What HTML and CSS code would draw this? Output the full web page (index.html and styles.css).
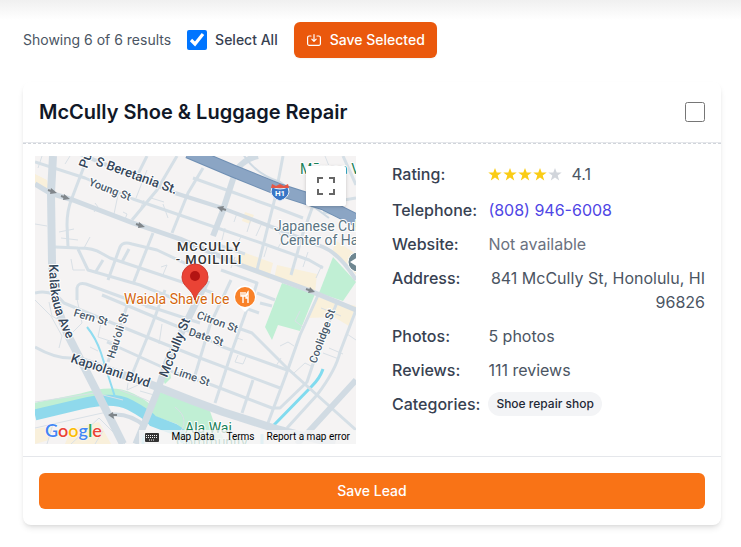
FILE: index.html
```
<!DOCTYPE html>
<html lang="en">
<head>
  <meta charset="UTF-8" />
  <meta name="viewport" content="width=device-width, initial-scale=1.0"/>
  <title>Lead Results</title>
  <link rel="stylesheet" href="styles.css">
</head>
<body>

  <main class="results">
    <div class="toolbar">
      <span class="result-count">Showing 6 of 6 results</span>
      <label class="select-all">
        <input type="checkbox" class="check" checked>
        Select All
      </label>
      <button type="button" class="btn btn-selected">
        <svg class="btn-icon" viewBox="0 0 16 16" fill="none" stroke="currentColor" stroke-width="1.2" stroke-linecap="round" stroke-linejoin="round" aria-hidden="true">
          <path d="M5 4H3.2A1.6 1.6 0 0 0 1.6 5.6v6.2a1.6 1.6 0 0 0 1.6 1.6h9.6a1.6 1.6 0 0 0 1.6-1.6V5.6A1.6 1.6 0 0 0 12.8 4H11M8 2.6v6.6M5.8 7.2 8 9.4 10.2 7.2"/>
        </svg>
        Save Selected
      </button>
    </div>

    <article class="card">
      <header class="card-header">
        <h2 class="card-title" id="lead-name">McCully Shoe &amp; Luggage Repair</h2>
        <input type="checkbox" class="check" aria-labelledby="lead-name">
      </header>

      <div class="card-body">
        <div class="map">
          <svg class="map-canvas" viewBox="0 0 321 288" preserveAspectRatio="xMidYMid slice" role="img" aria-label="Map of McCully - Moiliili">
            <defs>
              <path id="kalakaua" d="M14 108 C15 145 17 153 36 192"/>
            </defs>
            <rect width="321" height="288" fill="#f5f3f3"/>

            <!-- blocks and parks -->
            <g fill="#f9f0db">
              <path d="M0 18 12 24 14 35 0 29Z"/>
              <path d="M205 95 238 107 234 123 199 108Z"/>
              <path d="M242 109 282 118 280 137 239 123Z"/>
              <path d="M300 84 321 98V118L297 98Z"/>
              <path d="M281 141 321 150 314 170 299 161 272 162Z"/>
              <path d="M36 273 64 266 76 288H30Z"/>
              <path d="M0 273 18 270 14 284 0 288Z"/>
              <path d="M210 56 219 59 215 68 207 65Z"/>
            </g>
            <g fill="#c0efd4">
              <path d="M247 127 280 138 265 175 243 169 237 184 230 171Z"/>
              <path d="M298 101 321 126 308 145 284 137Z"/>
              <path d="M125 236 174 252 178 264 192 288H158L142 268 113 258Z"/>
              <path d="M128 224 135 216 136 222 130 228Z"/>
            </g>

            <!-- water -->
            <g fill="none">
              <path d="M0 253 48 243Q78 234 96 243T117 260" stroke="#c0efd4" stroke-width="12"/>
              <path d="M0 259 46 248Q78 240 95 249T118 265L139 273Q149 279 155 290" stroke="#8fd9ec" stroke-width="11"/>
              <path d="M52 171Q61 182 66 197L80 241" stroke="#8fdcf0" stroke-width="2"/>
              <path d="M288 213Q285 222 277 230L238 270" stroke="#81dbef" stroke-width="3"/>
              <path d="M108 288V278M227 288V278" stroke="#8fdcf0" stroke-width="3"/>
            </g>

            <!-- side lanes -->
            <g fill="none" stroke="#d9e0e6" stroke-width="1">
              <path d="M7 0 3 12M30 8 35 0M75 14 89 18M84 34 79 58M109 44 104 56M112 14 101 42M60 47 63 51 59 56M88 56 92 58 89 66M128 48 133 62M24 76 39 73M26 82 43 84M55 81 49 92M126 111 132 109 127 121M36 103 38 114 50 114M0 68 12 70M116 42 129 46M161 22 165 24"/>
              <path d="M202 57 199 66M216 63 212 76M226 69 221 80M190 72 187 84M207 79 201 90M232 91 229 101M243 75 248 83 243 92M252 80 263 84M273 96 268 111M287 109 281 122M200 101 196 112M291 32 296 15 290 0M300 16 286 21"/>
              <path d="M14 146 17 160 27 166M42 143 47 167 38 176M0 144 16 160 27 180 24 192M67 162 63 181 78 186M110 151 121 154M127 168 124 188M55 191 63 195M93 227 92 234 103 229M85 234 109 243 118 247M105 235 119 239M202 182 208 184M203 199 200 206 208 208 211 201M245 190 253 186 259 190M265 155 260 165 268 171M259 217 270 207 278 211M288 197 304 203M294 192 308 198M312 178 321 184M241 210 246 202M286 152 306 160"/>
              <path d="M0 246 60 237 88 244M0 272 72 256M36 288 64 262 90 288M18 268 12 288M68 275 60 288M140 251Q157 264 142 280"/>
            </g>

            <!-- streets -->
            <g fill="none" stroke="#d5dfe6" stroke-width="3" stroke-linejoin="round">
              <path d="M0 6 50 22 98 43 165 66 232 89 274 104 288 112"/>
              <path d="M53 0 37 42Q32 54 32 69L33 91"/>
              <path d="M142 0 122 34 97 64"/>
              <path d="M168 12 153 37 137 77"/>
              <path d="M112 0 102 20"/>
              <path d="M158 22 200 37 242 52 268 62"/>
              <path d="M248 0 240 42 222 114"/>
              <path d="M280 44 268 77 256 119"/>
              <path d="M321 42 285 48M308 0 321 29M288 56 321 61"/>
              <path d="M20 91 43 92Q59 92 66 97L75 102 150 127 178 137"/>
              <path d="M43 93 53 114 105 129 145 145"/>
              <path d="M73 124 85 91Q88 85 97 88L122 94 158 111"/>
              <path d="M118 77 105 110 98 128M94 93 87 106M68 104 60 117"/>
              <path d="M42 144V132Q43 126 51 128L92 143 165 167"/>
              <path d="M0 137Q18 133 29 147L70 164 112 181 165 202 245 232"/>
              <path d="M67 139 122 162 168 181 188 191 252 214"/>
              <path d="M72 186 105 201 138 216 177 229 237 252H245L272 226 282 196 303 144"/>
              <path d="M94 144 73 206M130 134 112 182 96 221"/>
              <path d="M196 124 175 169 158 226M216 142 198 192 180 247M218 224 207 257"/>
              <path d="M284 137 265 179 252 216 233 267"/>
              <path d="M321 154 305 196Q301 214 282 239L252 272"/>
              <path d="M203 172 217 177 252 212 282 239 321 274"/>
              <path d="M181 88 210 98M186 114 222 127 217 143M225 147 237 150M222 137 240 144M210 152 224 157"/>
              <path d="M38 202Q21 203 0 191"/>
            </g>

            <!-- main roads -->
            <g fill="none" stroke="#d1dbe3" stroke-width="5" stroke-linejoin="round">
              <path d="M0 28 15 37 38 44 98 67 145 83 205 109 273 134 321 154"/>
              <path d="M45-2 140 37 187 52 237 71 288 91Q305 98 321 124" stroke-width="4"/>
              <path d="M223 0Q205 4 199 20L187 57 178 80" stroke-width="6"/>
              <path d="M18 0 16 37 17 107Q18 153 38 189L62 236 88 288" stroke-width="8"/>
              <path d="M172 124 132 206 122 236 110 266 101 288" stroke-width="7"/>
              <path d="M38 202 112 227 158 245 188 256 238 272 300 288" stroke-width="8"/>
              <path d="M74 259Q94 256 111 271" stroke-width="4"/>
              <path d="M321 224 278 271 262 288" stroke-width="6"/>
            </g>
            <path d="M208-2Q220 18 245 26L294 62" fill="none" stroke="#cfdae3" stroke-width="2"/>
            <path d="M153-4 198 15 245 34 289 48 327 67" fill="none" stroke="#6f8fb3" stroke-width="13"/>
            <path d="M153-4 198 15 245 34 289 48 327 67" fill="none" stroke="#8ba5c4" stroke-width="11"/>

            <!-- one-way arrows -->
            <g fill="none" stroke="#80868b" stroke-width="2">
              <path d="M13 34 19 36M26 40 32 42M101 68 107 70M191 54 185 52M271 133 277 135M82 259H75"/>
            </g>
            <g fill="#80868b">
              <path d="M16 32 22 37 15 38ZM29 38 35 43 28 44ZM104 66 110 71 103 72ZM189 50 182 51 187 56ZM275 131 280 136 273 137ZM78 256 73 259 79 263Z"/>
            </g>

            <!-- highway shield -->
            <path d="M237 31Q245 35 253 31L254 36Q253 42 245 45 237 42 236 36Z" fill="#3976c6" stroke="#e9eef5" stroke-width="1"/>
            <path d="M237 28 241 30 245 28 249 30 253 28 254 32H236Z" fill="#e45746"/>
            <text x="245" y="40" class="shield-text">H1</text>

            <!-- street names -->
            <g class="street">
              <text x="52" y="13" transform="rotate(-70 52 13)" class="street-lg">Pu</text>
              <text x="60" y="9" transform="rotate(20 60 9)" class="street-lg">S Beretania St.</text>
              <text x="53" y="29" transform="rotate(21 53 29)">Young St</text>
              <text class="street-lg"><textPath href="#kalakaua">Kalākaua Ave</textPath></text>
              <text x="38" y="160" transform="rotate(16 38 160)">Fern St</text>
              <text x="79" y="203" transform="rotate(-72 79 203)">Hau‘oli St</text>
              <text x="132" y="222" transform="rotate(-68 132 222)" class="street-lg">McCully St</text>
              <text x="35" y="206" transform="rotate(18 35 206)" class="street-lg">Kapiolani Blvd</text>
              <text x="161" y="162" transform="rotate(20 161 162)">Citron St</text>
              <text x="153" y="179" transform="rotate(18 153 179)">Date St</text>
              <text x="138" y="218" transform="rotate(19 138 218)">Lime St</text>
              <text x="281" y="208" transform="rotate(-70 281 208)">Coolidge St</text>
            </g>

            <g class="place">
              <text x="174" y="95" class="area">MCCULLY</text>
              <text x="174" y="108" class="area">- MOILIILI</text>
              <text x="239" y="75">Japanese Cultural</text>
              <text x="245" y="89">Center of Hawaii</text>
              <text x="265" y="18" class="park">Māmoa Valley</text>
              <text x="150" y="277" class="park">Ala Wai</text>
              <text x="141" y="291" class="park">Community</text>
              <text x="89" y="148" class="food">Waiola Shave Ice</text>
            </g>

            <!-- school marker at the right edge -->
            <circle cx="323" cy="106" r="10" fill="#6f8791" stroke="#fff" stroke-width="1"/>
            <path d="M315 106 323 101V111Z" fill="#fff"/>

            <!-- restaurant marker -->
            <path d="M210 156Q205 151 202 148A11 11 0 1 1 218 148Q215 151 210 156Z" fill="#fff"/>
            <circle cx="210" cy="141" r="10" fill="#f98128"/>
            <path d="M206 136V140H210V136M208 136V147M213 147V136Q211 138 211 142H213" fill="none" stroke="#fff" stroke-width="1.4"/>

            <!-- location pin -->
            <path d="M160 108A13 13 0 0 1 173 121C173 131 163 132 160 144 157 132 147 131 147 121A13 13 0 0 1 160 108Z" fill="#ea4335" stroke="#d23a2e" stroke-width="1"/>
            <circle cx="160" cy="120" r="5" fill="#b31412"/>
          </svg>

          <button type="button" class="map-fullscreen" aria-label="Toggle fullscreen view">
            <svg viewBox="0 0 18 18" width="18" height="18" fill="#666" aria-hidden="true">
              <path d="M0 0H6V2H2V6H0ZM12 0H18V6H16V2H12ZM0 12H2V16H6V18H0ZM16 12H18V18H12V16H16Z"/>
            </svg>
          </button>

          <span class="map-logo"><span class="g-blue">G</span><span class="g-red">o</span><span class="g-yellow">o</span><span class="g-blue">g</span><span class="g-green">l</span><span class="g-red">e</span></span>

          <div class="map-legal">
            <button type="button" class="map-keys" aria-label="Keyboard shortcuts">
              <svg viewBox="0 0 14 9" width="14" height="9" aria-hidden="true">
                <rect width="14" height="9" rx="1" fill="#333"/>
                <path d="M1 2.5H13M1 4.5H13M4 7H10" stroke="#f5f5f5" stroke-width="1" stroke-dasharray="1 1"/>
              </svg>
            </button>
            <button type="button">Map Data</button>
            <a href="#terms">Terms</a>
            <a href="#report">Report a map error</a>
          </div>
        </div>

        <dl class="details">
          <dt>Rating:</dt>
          <dd class="rating">
            <svg class="stars" viewBox="0 0 75 15" role="img" aria-label="4 out of 5 stars">
              <defs>
                <path id="star" d="M7 1 8.7 5.6H13.7L9.7 8.6 11.2 13.5 7 10.6 2.8 13.5 4.3 8.6.3 5.6H5.3Z"/>
              </defs>
              <g fill="#facc15">
                <use href="#star"/>
                <use href="#star" x="15"/>
                <use href="#star" x="30"/>
                <use href="#star" x="45"/>
              </g>
              <use href="#star" x="60" fill="#d1d5db"/>
            </svg>
            4.1
          </dd>
          <dt>Telephone:</dt>
          <dd><a href="tel:8089466008">(808) 946-6008</a></dd>
          <dt>Website:</dt>
          <dd class="muted">Not available</dd>
          <dt>Address:</dt>
          <dd class="address">841 McCully St, Honolulu, HI 96826</dd>
          <dt>Photos:</dt>
          <dd>5 photos</dd>
          <dt>Reviews:</dt>
          <dd>111 reviews</dd>
          <dt>Categories:</dt>
          <dd><span class="tag">Shoe repair shop</span></dd>
        </dl>
      </div>

      <footer class="card-footer">
        <button type="button" class="btn btn-lead">Save Lead</button>
      </footer>
    </article>
  </main>

</body>
</html>
```
FILE: styles.css
```
* {
  box-sizing: border-box;
}

body {
  margin: 0;
  font-family: Inter, "Liberation Sans", sans-serif;
  font-size: 16px;
  line-height: 24px;
  color: #4b5563;
  background: linear-gradient(#f0f0f0, #fff 20px) no-repeat #fff;
}

button {
  font-family: inherit;
  border: 0;
  cursor: pointer;
}

.results {
  padding: 22px 20px 22px 23px;
}

.toolbar {
  display: flex;
  align-items: center;
  gap: 16px;
  margin-bottom: 24px;
  font-size: 14px;
  line-height: 20px;
}

.select-all {
  display: flex;
  align-items: center;
  gap: 8px;
  font-weight: 500;
  color: #374151;
}

.check {
  width: 20px;
  height: 20px;
  margin: 0;
}

.btn {
  display: flex;
  align-items: center;
  justify-content: center;
  gap: 8px;
  padding: 8px 12px;
  border-radius: 6px;
  font-size: 14px;
  font-weight: 500;
  line-height: 20px;
  color: #fff;
}

.btn-selected {
  background: #ea580c;
  box-shadow: 0 1px 2px rgba(0, 0, 0, 0.05);
}

.btn-icon {
  width: 16px;
  height: 16px;
}

.card {
  background: #fff;
  border-radius: 8px;
  box-shadow: 0 4px 6px -1px rgba(0, 0, 0, 0.1), 0 2px 4px -2px rgba(0, 0, 0, 0.1);
}

.card-header {
  display: flex;
  align-items: center;
  justify-content: space-between;
  padding: 16px;
  border-bottom: 1px solid #e5e7eb;
}

.card-title {
  margin: 0;
  font-size: 20px;
  font-weight: 600;
  line-height: 28px;
  color: #111827;
}

.card-body {
  display: grid;
  grid-template-columns: 1fr 1fr;
  gap: 32px;
  padding: 12px;
  border-top: 1px dashed #d1d5db;
}

.map {
  position: relative;
  height: 288px;
  overflow: hidden;
  font-family: Roboto, Arial, sans-serif;
}

.map-canvas {
  display: block;
  width: 100%;
  height: 100%;
}

.map-canvas text {
  paint-order: stroke;
  stroke: #fff;
  stroke-width: 2px;
  stroke-linejoin: round;
}

.street {
  font-size: 11px;
  font-weight: 500;
  fill: #4a5a6b;
}

.street-lg {
  font-size: 13px;
  fill: #34465a;
}

.place {
  font-size: 14px;
  fill: #5b7482;
}

.area {
  font-size: 13px;
  font-weight: 500;
  letter-spacing: 1px;
  text-anchor: middle;
  fill: #333;
}

.park {
  fill: #188058;
}

.food {
  fill: #d5660c;
}

.map-canvas .shield-text {
  font-size: 8px;
  font-weight: 700;
  text-anchor: middle;
  fill: #fff;
  stroke: none;
}

.map-fullscreen {
  position: absolute;
  top: 10px;
  right: 10px;
  display: flex;
  align-items: center;
  justify-content: center;
  width: 40px;
  height: 40px;
  padding: 0;
  background: #fff;
  border-radius: 2px;
  box-shadow: 0 1px 4px -1px rgba(0, 0, 0, 0.3);
}

.map-logo {
  position: absolute;
  left: 10px;
  bottom: 2px;
  font-family: Lato, sans-serif;
  font-size: 18px;
  font-weight: 600;
  line-height: 24px;
  text-shadow: 0 0 1px #fff, 0 0 2px #fff;
}

.g-blue {
  color: #4285f4;
}

.g-red {
  color: #ea4335;
}

.g-yellow {
  color: #fbbc05;
}

.g-green {
  color: #34a853;
}

.map-legal {
  position: absolute;
  right: 0;
  bottom: 0;
  display: flex;
}

.map-legal button,
.map-legal a {
  padding: 0 6px;
  font-size: 10px;
  line-height: 14px;
  color: #000;
  text-decoration: none;
  background: rgba(245, 245, 245, 0.8);
}

.map-keys {
  display: flex;
  align-items: center;
}

.details {
  display: grid;
  grid-template-columns: auto 1fr;
  align-content: start;
  gap: 10px 8px;
  margin: 0;
  padding: 6px 4px;
}

.details dt {
  font-weight: 500;
  color: #374151;
}

.details dd {
  margin: 0;
}

.details a {
  color: #4f46e5;
  text-decoration: none;
}

.rating {
  display: flex;
  align-items: center;
  gap: 8px;
  padding-bottom: 2px;
}

.stars {
  width: 75px;
  height: 15px;
}

.details .muted {
  color: #6b7280;
}

.address {
  text-align: right;
}

.tag {
  display: inline-block;
  padding: 4px 8px;
  border-radius: 12px;
  font-size: 12px;
  font-weight: 500;
  line-height: 16px;
  color: #1f2937;
  background: #f3f4f6;
  vertical-align: top;
}

.card-footer {
  padding: 16px;
  border-top: 1px solid #e5e7eb;
}

.btn-lead {
  width: 100%;
  background: #f97316;
}
```
